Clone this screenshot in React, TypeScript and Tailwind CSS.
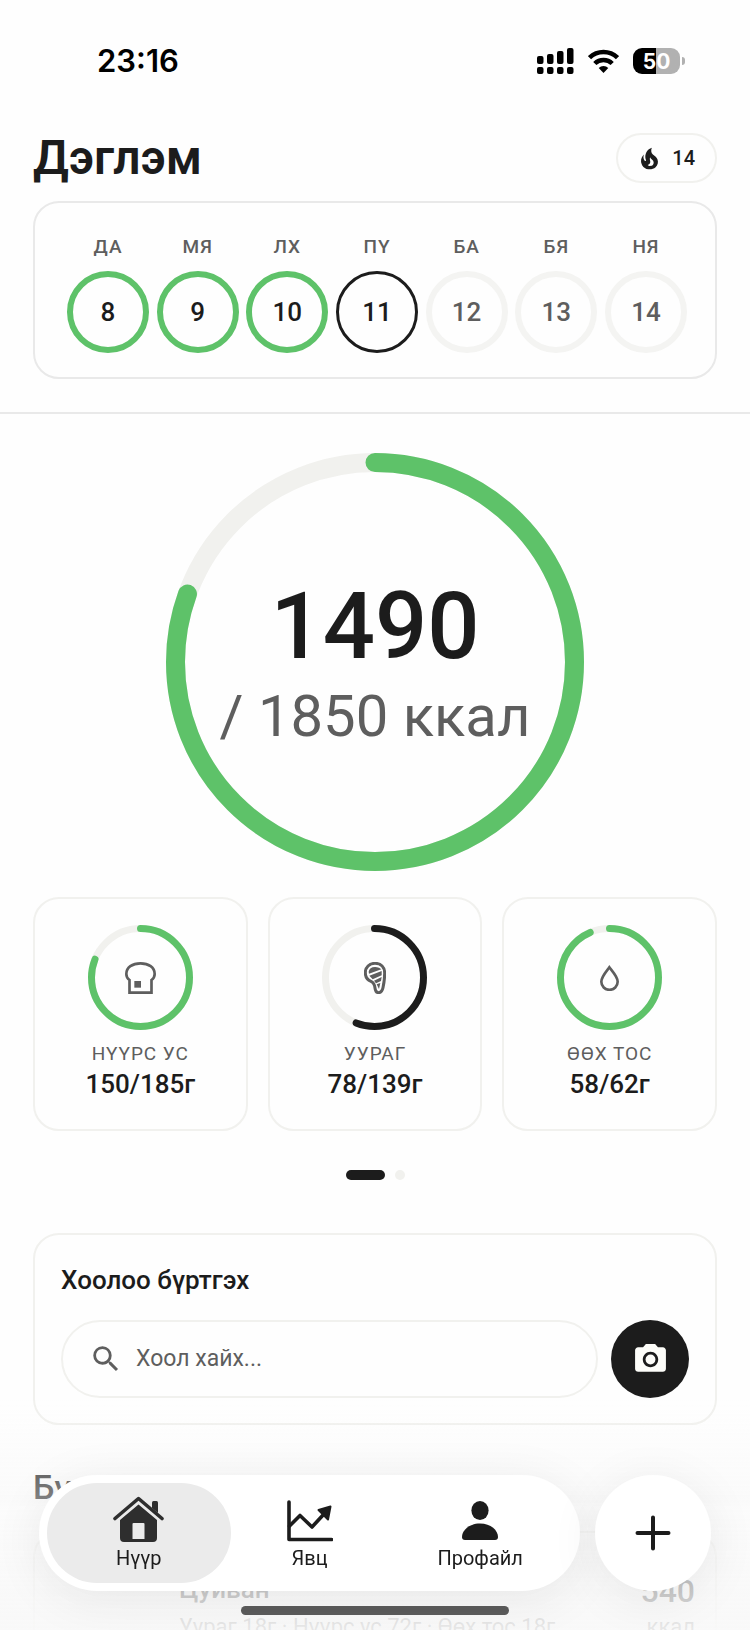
import React from 'react';
import { MdCameraAlt, MdSearch } from 'react-icons/md';

type DayState = 'done' | 'today' | 'upcoming';

const week: { label: string; date: number; state: DayState }[] = [
  { label: 'ДА', date: 8, state: 'done' },
  { label: 'МЯ', date: 9, state: 'done' },
  { label: 'ЛХ', date: 10, state: 'done' },
  { label: 'ПҮ', date: 11, state: 'today' },
  { label: 'БА', date: 12, state: 'upcoming' },
  { label: 'БЯ', date: 13, state: 'upcoming' },
  { label: 'НЯ', date: 14, state: 'upcoming' },
];

const dayStyles: Record<DayState, string> = {
  done: 'border-6 border-[#5ec269] text-[#1c1c1c]',
  today: 'border-3 border-[#1c1c1c] text-[#1c1c1c]',
  upcoming: 'border-6 border-[#f4f4f2] text-[#5e5e5e]',
};

const FireIcon = () => (
  <svg width="29" height="29" viewBox="0 0 24 24" fill="#1c1c1c" aria-hidden="true">
    <path d="M17.66 11.2c-.23-.3-.51-.56-.77-.82-.67-.6-1.43-1.03-2.07-1.66C13.33 7.26 13 4.85 13.95 3c-.95.23-1.78.75-2.49 1.32-2.59 2.08-3.61 5.75-2.39 8.9.04.1.08.2.08.33 0 .22-.15.42-.35.5-.23.1-.47.04-.66-.12a.58.58 0 0 1-.14-.17c-1.13-1.43-1.31-3.48-.55-5.12C5.78 10 4.87 12.3 5 14.47c.06.5.12 1 .29 1.5.14.6.41 1.2.71 1.73 1.08 1.73 2.95 2.97 4.96 3.22 2.14.27 4.43-.12 6.07-1.6 1.83-1.66 2.47-4.32 1.53-6.6l-.13-.26c-.21-.46-.77-1.26-.77-1.26m-3.16 6.3c-.28.24-.74.5-1.1.6-1.12.4-2.24-.16-2.9-.82 1.19-.28 1.9-1.16 2.11-2.05.17-.8-.15-1.46-.28-2.23-.12-.74-.1-1.37.17-2.06.19.38.39.76.63 1.06.77 1 1.98 1.44 2.24 2.8.04.14.06.28.06.43.03.82-.33 1.72-.93 2.27" />
  </svg>
);

const BreadIcon = () => (
  <svg width="31" height="32" viewBox="0 0 93 96" fill="none" stroke="#5e5e5e" strokeWidth="8" aria-hidden="true">
    <path d="M13.500 54C6 49 4 42 4 36 4 16 22 4 46.500 4S89 16 89 36c0 6-2 13-9.500 18v38h-66Z" />
    <rect x="28" y="57" width="20" height="20" fill="#5e5e5e" stroke="none" />
  </svg>
);

const SteakIcon = () => (
  <svg width="22" height="32" viewBox="0 0 66 96" fill="none" stroke="#5e5e5e" aria-hidden="true">
    <path
      d="M33 4C16 4 4 16 4 32c0 13 7 22 17 26 9 4 11 10 12 20 1 9 4 14 11 14 8 0 11-6 13-15 3-14 5-28 5-43C62 15 51 4 33 4Z"
      strokeWidth="9"
    />
    <path d="M14 29c2-10 12-17 31-12l7 5-37 13ZM16 41l37-14v13l-27 12ZM30 56l23-11-2 12-15 7ZM38 67l11-4-4 18Z" fill="#5e5e5e" stroke="none" />
  </svg>
);

const DropIcon = () => (
  <svg width="19" height="26" viewBox="0 0 57 78" fill="none" stroke="#5e5e5e" strokeWidth="8" aria-hidden="true">
    <path d="M28 7C20 18 4 35 4 50a24 24 0 0 0 49 0C53 35 36 18 28 7Z" />
  </svg>
);

const macros = [
  { label: 'НҮҮРС УС', value: 150, goal: 185, color: '#5ec269', icon: <BreadIcon /> },
  { label: 'УУРАГ', value: 78, goal: 139, color: '#1c1c1c', icon: <SteakIcon /> },
  { label: 'ӨӨХ ТОС', value: 58, goal: 62, color: '#5ec269', icon: <DropIcon /> },
];

interface RingProps {
  size: number;
  stroke: number;
  progress: number;
  color: string;
  children: React.ReactNode;
}

const Ring: React.FC<RingProps> = ({ size, stroke, progress, color, children }) => {
  const r = (size - stroke) / 2;
  const c = size / 2;
  return (
    <div className="grid place-items-center">
      <svg width={size} height={size} className="col-start-1 row-start-1 -rotate-90" fill="none" strokeWidth={stroke} aria-hidden="true">
        <circle cx={c} cy={c} r={r} stroke="#f1f1ee" />
        <circle
          cx={c}
          cy={c}
          r={r}
          stroke={color}
          pathLength={100}
          strokeDasharray={`${progress * 100} 100`}
          strokeLinecap="round"
        />
      </svg>
      <div className="col-start-1 row-start-1 flex flex-col items-center">{children}</div>
    </div>
  );
};

const StatusBar = () => (
  <div className="flex h-[34px] items-center justify-between pl-16 pr-8 font-['Inter',sans-serif]">
    <span className="text-[31px] font-semibold leading-8 text-black">23:16</span>
    <div className="flex items-center gap-[14px]">
      <svg width="37" height="26" viewBox="0 0 37 26" aria-hidden="true">
        <rect x="0" y="8" width="6.500" height="8" rx="2" />
        <rect x="10" y="6" width="6.500" height="10" rx="2" />
        <rect x="20" y="3" width="6.500" height="13" rx="2" />
        <rect x="30" y="0" width="6.500" height="16" rx="2" />
        <rect x="0" y="19" width="6.500" height="7" rx="2" />
        <rect x="10" y="19" width="6.500" height="7" rx="2" />
        <rect x="20" y="19" width="6.500" height="7" rx="2" />
        <rect x="30" y="19" width="6.500" height="7" rx="2" />
      </svg>
      <svg width="31" height="24" viewBox="0 0 31 24" fill="none" stroke="#000" strokeWidth="4.500" aria-hidden="true">
        <path d="M1.500 8.700a20 20 0 0 1 28 0M6.800 14.500a12.400 12.400 0 0 1 17.400 0" />
        <path d="m15.500 24-4.800-5a7 7 0 0 1 9.600 0Z" fill="#000" stroke="none" />
      </svg>
      <div className="flex items-center gap-[2px]">
        <span className="flex h-[26px] w-[47px] items-center justify-center rounded-[9px] bg-linear-to-r from-black from-50% to-[#b1b1b1] to-50% text-[21px] font-bold leading-none text-white">
          50
        </span>
        <span className="h-2 w-[3px] rounded-r-full bg-[#b1b1b1]" />
      </div>
    </div>
  </div>
);

const HomeIcon = () => (
  <svg width="51" height="46" viewBox="0 0 51 46" aria-hidden="true">
    <path d="m2 22.500 23.500-20 23.500 20" fill="none" stroke="#2e2e2e" strokeWidth="3.600" strokeLinecap="round" strokeLinejoin="round" />
    <path d="M39 6.500q0-1.500 1.500-1.500h3q1.500 0 1.500 1.500V17l-6-5Z" fill="#2e2e2e" />
    <path
      d="M25.500 8.500 44 24v18q0 4-4 4H11q-4 0-4-4V24ZM20.500 27q-1 0-1 1v15h12V28q0-1-1-1Z"
      fill="#2e2e2e"
      fillRule="evenodd"
    />
  </svg>
);

const ProgressIcon = () => (
  <svg width="46" height="46" viewBox="0 0 46 46" fill="none" stroke="#1c1c1c" strokeWidth="3.600" strokeLinecap="round" strokeLinejoin="round" aria-hidden="true">
    <path d="M2 6v37.500h42.500" />
    <path d="M2.500 30 13 19.500l12 11.500L37 18" />
    <path d="M43.500 10.500 31.500 14l9.500 9.500Z" fill="#1c1c1c" strokeWidth="2" />
  </svg>
);

const ProfileIcon = () => (
  <svg width="36" height="46" viewBox="0 0 36 46" fill="#1c1c1c" aria-hidden="true">
    <ellipse cx="18" cy="14.500" rx="8.600" ry="9.500" />
    <path d="M18 27.500c11 0 18 7 18 13.500q0 3-3 3H3q-3 0-3-3c0-6.500 7-13.500 18-13.500Z" />
  </svg>
);

const tabs = [
  { label: 'Нүүр', icon: <HomeIcon />, active: true },
  { label: 'Явц', icon: <ProgressIcon />, active: false },
  { label: 'Профайл', icon: <ProfileIcon />, active: false },
];

export default function App() {
  return (
    <div className="h-screen overflow-hidden bg-[#fefefe] font-['Roboto',sans-serif] text-[#1c1c1c]">
      <header className="border-b-2 border-[#e9e9e9] px-[33px] pb-[33px] pt-[44px]">
        <StatusBar />

        <div className="mt-[55px] flex items-center justify-between">
          <h1 className="text-[48px] font-semibold leading-[50px]">Дэглэм</h1>
          <button type="button" className="flex h-[50px] items-center gap-2 rounded-full border-2 border-[#f1f1ee] pl-[17px] pr-5 text-[20px] font-medium">
            <FireIcon />
            14
          </button>
        </div>

        {/* Week strip */}
        <div className="mt-[18px] flex justify-between rounded-[26px] border-2 border-[#e9e9e9] pb-6 pl-8 pr-7 pt-8">
          {week.map((day) => (
            <div key={day.date} className="flex flex-col items-center gap-3">
              <span className="text-[19px] font-medium leading-6 tracking-wider text-[#5e5e5e]">{day.label}</span>
              <button
                type="button"
                className={`flex size-[82px] items-center justify-center rounded-full text-[26px] font-medium ${dayStyles[day.state]}`}
              >
                {day.date}
              </button>
            </div>
          ))}
        </div>
      </header>

      <main className="px-[33px] pt-[39px]">
        {/* Calories */}
        <Ring size={418} stroke={19} progress={1490 / 1850} color="#5ec269">
          <span className="pt-3 text-[92px] font-medium leading-[96px]">1490</span>
          <span className="text-[58px] leading-[82px] text-[#5e5e5e]">/ 1850 ккал</span>
        </Ring>

        {/* Macros */}
        <div className="mt-[26px] grid grid-cols-3 gap-5">
          {macros.map((macro) => (
            <div key={macro.label} className="flex flex-col items-center rounded-[26px] border-2 border-[#f1f1ee] pb-[29px] pt-[26px]">
              <Ring size={105} stroke={7} progress={macro.value / macro.goal} color={macro.color}>
                {macro.icon}
              </Ring>
              <span className="mt-[10px] text-[19px] leading-7 tracking-wider text-[#5e5e5e]">{macro.label}</span>
              <span className="text-[26px] font-medium leading-8">
                {macro.value}/{macro.goal}г
              </span>
            </div>
          ))}
        </div>

        <div className="mt-[39px] flex items-center justify-center gap-[10px]">
          <span className="h-[10px] w-[39px] rounded-full bg-[#1c1c1c]" />
          <span className="size-[10px] rounded-full bg-[#f1f1ee]" />
        </div>

        {/* Food log */}
        <section className="mt-[53px] rounded-[26px] border-2 border-[#f1f1ee] px-[26px] pb-[25px] pt-[29px]">
          <h2 className="text-[26px] font-medium leading-8">Хоолоо бүртгэх</h2>
          <div className="mt-6 flex items-center gap-[13px]">
            <label className="flex h-[78px] min-w-0 flex-1 items-center gap-[13px] rounded-full border-2 border-[#f1f1ee] pl-[26px]">
              <MdSearch size={34} color="#5e5e5e" />
              <input
                type="text"
                placeholder="Хоол хайх..."
                aria-label="Хоол хайх"
                className="min-w-0 flex-1 bg-transparent text-[23px] outline-none placeholder:text-[#5e5e5e]"
              />
            </label>
            <button type="button" aria-label="Камер" className="flex size-[78px] shrink-0 items-center justify-center rounded-full bg-[#1c1c1c] text-[#fdfdf9]">
              <MdCameraAlt size={37} />
            </button>
          </div>
        </section>

        {/* Meals */}
        <h2 className="mt-[42px] text-[34px] font-medium leading-10">Бү</h2>
        <article className="mt-6 flex justify-between rounded-[26px] border-2 border-[#f1f1ee] pb-6 pl-[144px] pr-5 pt-[40px]">
          <div>
            <h3 className="text-[26px] font-medium leading-8">Цуйван</h3>
            <p className="mt-2 text-[22px] leading-7 text-[#5e5e5e]">Уураг 18г · Нүүрс ус 72г · Өөх тос 18г</p>
          </div>
          <div className="text-right">
            <p className="text-[32px] font-medium leading-9">540</p>
            <p className="mt-1 text-[22px] leading-7 text-[#5e5e5e]">ккал</p>
          </div>
        </article>
      </main>

      <div className="fixed inset-x-0 bottom-0 bg-linear-to-b from-[#f8f8f8]/0 via-[#f8f8f8]/60 via-55% to-[#f8f8f8]/90 px-[39px] pb-[15px] pt-[75px]">
        <div className="flex gap-[15px]">
          <nav className="flex h-[116px] flex-1 rounded-full bg-white p-2 shadow-[0_8px_50px_rgba(0,0,0,0.08)]">
            {tabs.map((tab) => (
              <a
                key={tab.label}
                href="#"
                className={`flex flex-1 flex-col items-center justify-center gap-[2px] rounded-full pt-[2px] text-[20px] leading-7 not-first:-ml-[13px] ${
                  tab.active ? 'bg-[#ebebeb]' : ''
                }`}
              >
                {tab.icon}
                {tab.label}
              </a>
            ))}
          </nav>
          <button
            type="button"
            aria-label="Нэмэх"
            className="flex size-[116px] items-center justify-center rounded-full bg-white shadow-[0_8px_50px_rgba(0,0,0,0.08)]"
          >
            <svg width="36" height="36" viewBox="0 0 36 36" stroke="#1c1c1c" strokeWidth="4" strokeLinecap="round" aria-hidden="true">
              <path d="M18 2.500v31M2.500 18h31" />
            </svg>
          </button>
        </div>
        <div className="mx-auto mt-[15px] h-[9px] w-[36%] min-w-[268px] rounded-full bg-[#5b5b5b]" />
      </div>
    </div>
  );
}
